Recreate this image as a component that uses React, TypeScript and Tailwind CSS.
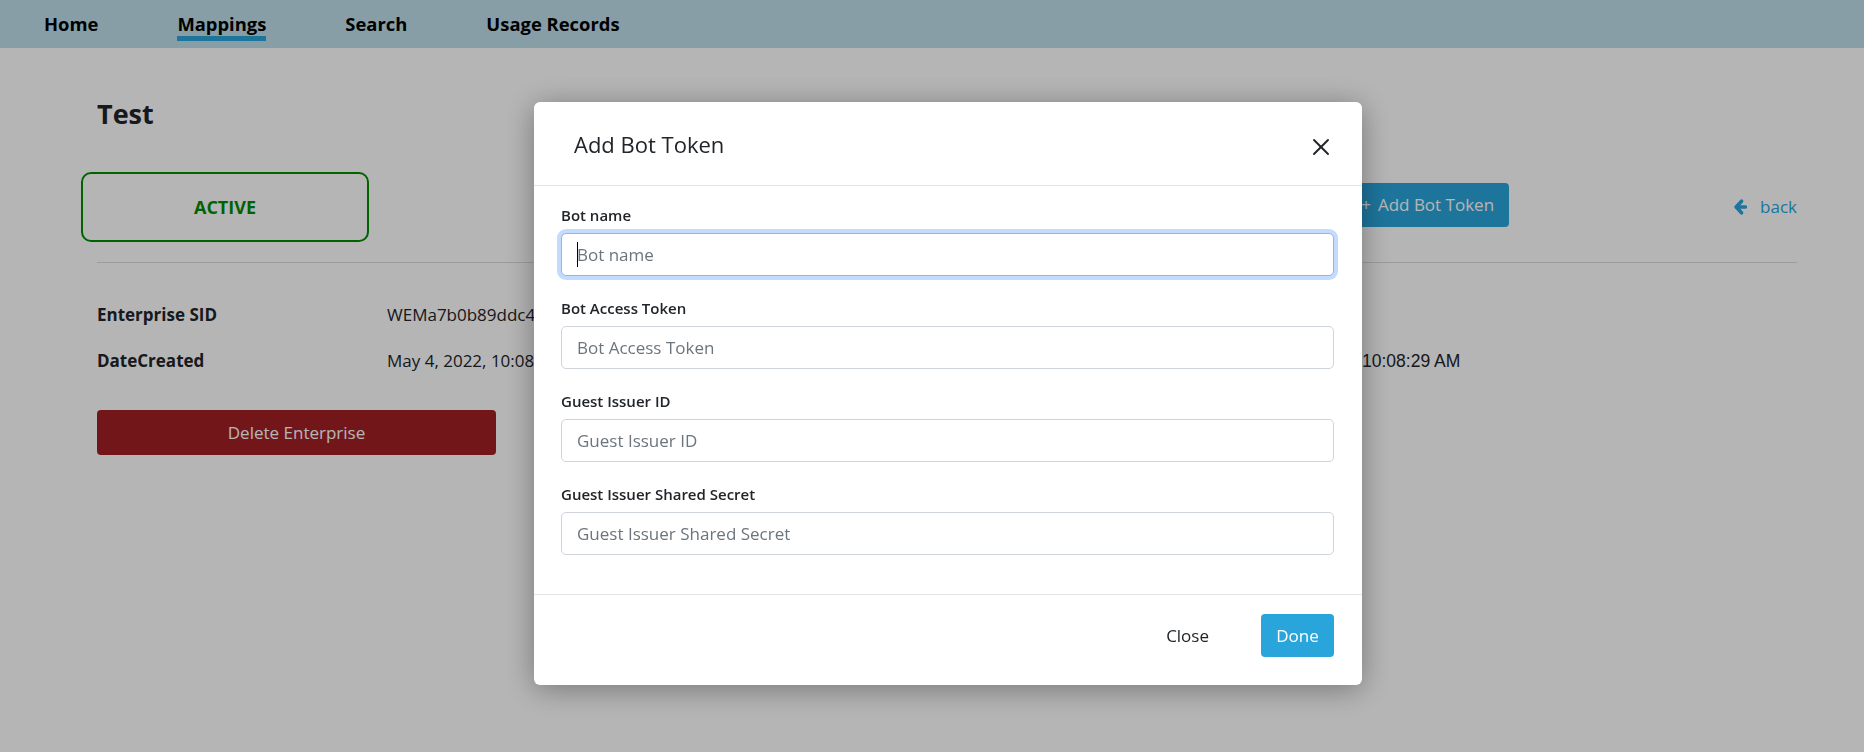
import React from 'react';

const navItems = ['Home', 'Mappings', 'Search', 'Usage Records'];

function Nav() {
  return (
    <nav className="flex h-[48px] items-start gap-[79px] bg-[#bedfea] pl-[44px] pt-[12px]">
      {navItems.map((item) => (
        <a
          key={item}
          className={`text-[18.4px] font-bold leading-[24px] text-black ${
            item === 'Mappings' ? 'border-b-[5px] border-[#2aa5dc]' : ''
          }`}
        >
          {item}
        </a>
      ))}
    </nav>
  );
}

// chunky left arrow, like the font-awesome one
function ArrowLeftSolid() {
  return (
    <svg width="13" height="16" viewBox="0 0 13 16" fill="none" stroke="currentColor" strokeLinecap="round" strokeLinejoin="round">
      <polyline points="7.5,2.2 2.2,8 7.5,13.8" strokeWidth="3.6" />
      <line x1="2.6" y1="8" x2="11.4" y2="8" strokeWidth="3.4" />
    </svg>
  );
}

function Field({ label, focused, first }: { label: string; focused?: boolean; first?: boolean }) {
  return (
    <div className={first ? '' : 'mt-[22px]'}>
      <label className="mb-[8px] block text-[15px] font-semibold leading-[20px] text-[#212529]">{label}</label>
      <div className="relative">
        <input
          placeholder={label}
          className={`block h-[43px] w-full rounded-[5px] border bg-white px-[15px] text-[17px] text-[#495057] outline-none placeholder:text-[#6c757d] ${
            focused
              ? 'border-[#86b7fe] shadow-[0_0_0_4px_rgba(13,110,253,0.25)]'
              : 'border-[#ced4da]'
          }`}
        />
        {focused && <span className="absolute left-[16px] top-[9px] h-[25px] w-px bg-black" />}
      </div>
    </div>
  );
}

export default function App() {
  return (
    <div className="relative min-h-[752px] bg-white font-['Open_Sans','Noto_Sans',sans-serif] text-[#212529]">
      <Nav />

      <main className="pl-[97px] pr-[67px] pt-[48px]">
        <h1 className="text-[27px] font-bold leading-[36px]">Test</h1>

        <div className="mt-[40px] flex items-center">
          <div className="ml-[-16px] flex h-[70px] w-[288px] items-center justify-center rounded-[10px] border-2 border-[#008c00] text-[18px] font-bold text-[#008c00]">
            ACTIVE
          </div>
          <div className="flex-1" />
          <button className="mb-[4px] flex h-[44px] items-center gap-[7px] rounded-[4px] bg-[#2aa5dc] pl-[14px] pr-[15px] text-[17px] text-white">
            <span>+</span>
            <span>Add Bot Token</span>
          </button>
          <a className="ml-[225px] flex items-center gap-[13px] text-[17px] text-[#2aa5dc]">
            <ArrowLeftSolid />
            <span>back</span>
          </a>
        </div>

        <hr className="mt-[20px] border-t border-[#dcdcdc]" />

        <div className="mt-[39px] flex flex-col gap-[20px] text-[17px]">
          <div className="flex h-[26px] items-center">
            <div className="w-[290px] font-bold">Enterprise SID</div>
            <div>WEMa7b0b89ddc4a1c2e3f4b5d6e7f8a9b0</div>
          </div>
          <div className="flex h-[26px] items-center">
            <div className="w-[290px] font-bold">DateCreated</div>
            <div className="w-[480px]">May 4, 2022, 10:08:29 AM</div>
            <div className="w-[389px] font-bold">DateUpdated</div>
            <div className="font-['Liberation_Sans',Arial,sans-serif] text-[17.5px]">May 4, 2022, 10:08:29 AM</div>
          </div>
        </div>

        <button className="mt-[36px] h-[45px] w-[399px] rounded-[4px] bg-[#a21f25] text-[17px] text-white">
          Delete Enterprise
        </button>
      </main>

      {/* backdrop */}
      <div className="fixed inset-0 bg-black/[0.29]" />

      {/* modal */}
      <div className="fixed left-[534px] top-[102px] w-[828px] rounded-[6px] bg-white shadow-[0_4px_30px_rgba(0,0,0,0.35)]">
        <div className="flex h-[84px] items-center justify-between border-b border-[#e3e3e3] pl-[40px] pr-[32px]">
          <h5 className="text-[22px] leading-[30px] text-[#212529]">Add Bot Token</h5>
          <button className="mt-[6px] text-[#212529]">
            <svg width="18" height="18" viewBox="0 0 18 18" stroke="currentColor" strokeWidth="1.9" strokeLinecap="round">
              <line x1="2" y1="2" x2="16" y2="16" />
              <line x1="16" y1="2" x2="2" y2="16" />
            </svg>
          </button>
        </div>

        <div className="pb-[39px] pl-[27px] pr-[28px] pt-[19px]">
          <Field label="Bot name" focused first />
          <Field label="Bot Access Token" />
          <Field label="Guest Issuer ID" />
          <Field label="Guest Issuer Shared Secret" />
        </div>

        <div className="flex items-center justify-end gap-[40px] border-t border-[#e3e3e3] pb-[28px] pr-[28px] pt-[19px]">
          <button className="px-[12px] text-[17px] text-[#212529]">Close</button>
          <button className="h-[43px] w-[73px] rounded-[4px] bg-[#2aa5dc] text-[17px] text-white">Done</button>
        </div>
      </div>
    </div>
  );
}
